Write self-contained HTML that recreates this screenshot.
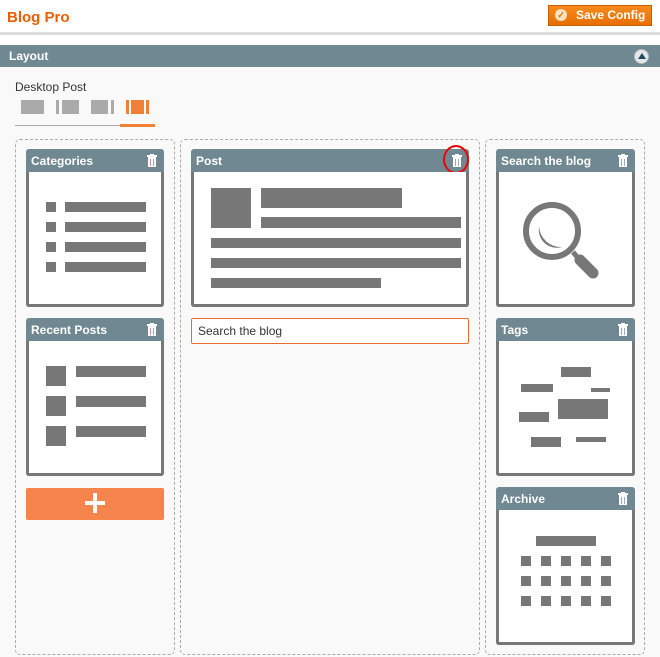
<!DOCTYPE html>
<html><head><meta charset="utf-8"><style>
*{margin:0;padding:0;box-sizing:border-box}
body{width:660px;height:657px;background:#f9f9f9;font-family:"Liberation Sans",Arial,sans-serif;position:relative;overflow:hidden}
.a{position:absolute}
.g{position:absolute;background:#777}
.w{position:absolute;background:#fff;border:3px solid #777;border-top:none;border-radius:0 0 3px 3px}
.h{position:absolute;background:#6f8891;color:#fff;font-weight:bold;font-size:12px;line-height:24px;padding-left:5px;border-radius:3px 3px 0 0}
.col{position:absolute;border:1px dashed #aaa;border-radius:5px}
.t{position:absolute;right:7px;top:5px;width:10px;height:13px}
</style></head><body>
<div class="a" style="left:0;top:0;width:660px;height:32px;background:#fff"></div>
<div class="a" style="left:7px;top:9px;color:#eb5e00;font-weight:bold;font-size:15px">Blog Pro</div>
<div class="a" style="left:548px;top:5px;width:104px;height:21px;background:linear-gradient(#f98a1e,#e86e00);border:1px solid #c95d00;color:#fff;font-weight:bold;font-size:12px;line-height:19px;padding-left:27px">Save Config</div>
<div class="a" style="left:555px;top:9px;width:12px;height:12px;border-radius:50%;background:#fde2c2;color:#e87000;font-size:9px;line-height:12px;text-align:center;font-weight:bold">✓</div>
<div class="a" style="left:0;top:32px;width:660px;height:3px;background:#dcdcdc"></div>
<div class="a" style="left:0;top:35px;width:660px;height:10px;background:#fff"></div>
<div class="a" style="left:0;top:45px;width:660px;height:22px;background:#6f8891;color:#fff;font-weight:bold;font-size:12px;line-height:22px;padding-left:9px">Layout</div>
<div class="a" style="left:634px;top:49px;width:15px;height:15px;border-radius:50%;background:#e4e8ea;border:1px solid #bbb"></div>
<div class="a" style="left:638px;top:53px;width:0;height:0;border-left:4px solid transparent;border-right:4px solid transparent;border-bottom:6px solid #1f4a5a"></div>
<div class="a" style="left:15px;top:80px;font-size:12px;color:#333">Desktop Post</div>
<div class="a" style="left:21px;top:100px;width:23px;height:14px;background:#aaa"></div>
<div class="a" style="left:56px;top:100px;width:3px;height:14px;background:#aaa"></div><div class="a" style="left:62px;top:100px;width:17px;height:14px;background:#aaa"></div>
<div class="a" style="left:91px;top:100px;width:17px;height:14px;background:#aaa"></div><div class="a" style="left:111px;top:100px;width:3px;height:14px;background:#aaa"></div>
<div class="a" style="left:126px;top:100px;width:3px;height:14px;background:#f08035"></div><div class="a" style="left:131px;top:100px;width:13px;height:14px;background:#f08035"></div><div class="a" style="left:146px;top:100px;width:3px;height:14px;background:#f08035"></div>
<div class="a" style="left:15px;top:125px;width:105px;height:1px;background:#aaa"></div>
<div class="a" style="left:120px;top:124px;width:35px;height:3px;background:#f08035"></div>

<div class="col" style="left:15px;top:139px;width:160px;height:516px"></div>
<div class="col" style="left:180px;top:139px;width:300px;height:516px"></div>
<div class="col" style="left:485px;top:139px;width:160px;height:516px"></div>

<div class="h" style="left:26px;top:149px;width:138px;height:23px">Categories<svg class="t" viewBox="0 0 10 13"><rect x="0" y="1" width="10" height="2" fill="#fff"/><rect x="3" y="0" width="4" height="1" fill="#fff"/><rect x="1" y="3" width="8" height="10" fill="#fff"/><rect x="3" y="5" width="1" height="7" fill="#b9a"/><rect x="6" y="5" width="1" height="7" fill="#9ab"/></svg></div>
<div class="w" style="left:26px;top:172px;width:138px;height:135px"></div>
<div class="g" style="left:46px;top:202px;width:10px;height:10px"></div><div class="g" style="left:65px;top:202px;width:81px;height:10px"></div>
<div class="g" style="left:46px;top:222px;width:10px;height:10px"></div><div class="g" style="left:65px;top:222px;width:81px;height:10px"></div>
<div class="g" style="left:46px;top:242px;width:10px;height:10px"></div><div class="g" style="left:65px;top:242px;width:81px;height:10px"></div>
<div class="g" style="left:46px;top:262px;width:10px;height:10px"></div><div class="g" style="left:65px;top:262px;width:81px;height:10px"></div>

<div class="h" style="left:26px;top:318px;width:138px;height:23px">Recent Posts<svg class="t" viewBox="0 0 10 13"><rect x="0" y="1" width="10" height="2" fill="#fff"/><rect x="3" y="0" width="4" height="1" fill="#fff"/><rect x="1" y="3" width="8" height="10" fill="#fff"/><rect x="3" y="5" width="1" height="7" fill="#b9a"/><rect x="6" y="5" width="1" height="7" fill="#9ab"/></svg></div>
<div class="w" style="left:26px;top:341px;width:138px;height:135px"></div>
<div class="g" style="left:46px;top:366px;width:20px;height:20px"></div><div class="g" style="left:76px;top:366px;width:70px;height:11px"></div>
<div class="g" style="left:46px;top:396px;width:20px;height:20px"></div><div class="g" style="left:76px;top:396px;width:70px;height:11px"></div>
<div class="g" style="left:46px;top:426px;width:20px;height:20px"></div><div class="g" style="left:76px;top:426px;width:70px;height:11px"></div>
<div class="a" style="left:26px;top:488px;width:138px;height:32px;background:#f4844b;border-radius:2px"></div>
<div class="a" style="left:85px;top:501px;width:20px;height:4px;background:#fff"></div><div class="a" style="left:93px;top:493px;width:4px;height:20px;background:#fff"></div>

<div class="h" style="left:191px;top:149px;width:278px;height:23px">Post<svg class="t" viewBox="0 0 10 13"><rect x="0" y="1" width="10" height="2" fill="#fff"/><rect x="3" y="0" width="4" height="1" fill="#fff"/><rect x="1" y="3" width="8" height="10" fill="#fff"/><rect x="3" y="5" width="1" height="7" fill="#b9a"/><rect x="6" y="5" width="1" height="7" fill="#9ab"/></svg></div>
<div class="a" style="left:443px;top:145px;width:26px;height:29px;border:2px solid #e00;border-radius:50%"></div>
<div class="w" style="left:191px;top:172px;width:278px;height:135px"></div>
<div class="g" style="left:211px;top:188px;width:40px;height:40px"></div>
<div class="g" style="left:261px;top:188px;width:141px;height:20px"></div>
<div class="g" style="left:261px;top:217px;width:200px;height:11px"></div>
<div class="g" style="left:211px;top:238px;width:250px;height:10px"></div>
<div class="g" style="left:211px;top:258px;width:250px;height:10px"></div>
<div class="g" style="left:211px;top:278px;width:170px;height:10px"></div>
<div class="a" style="left:191px;top:318px;width:278px;height:26px;background:#fff;border:1px solid #eb6a2d;border-radius:2px;font-size:12px;color:#333;line-height:24px;padding-left:6px">Search the blog</div>

<div class="h" style="left:496px;top:149px;width:139px;height:23px">Search the blog<svg class="t" viewBox="0 0 10 13"><rect x="0" y="1" width="10" height="2" fill="#fff"/><rect x="3" y="0" width="4" height="1" fill="#fff"/><rect x="1" y="3" width="8" height="10" fill="#fff"/><rect x="3" y="5" width="1" height="7" fill="#b9a"/><rect x="6" y="5" width="1" height="7" fill="#9ab"/></svg></div>
<div class="w" style="left:496px;top:172px;width:139px;height:135px"></div>
<svg class="a" style="left:496px;top:172px" width="139" height="132" viewBox="0 0 139 132"><circle cx="56" cy="59" r="26" fill="none" stroke="#777" stroke-width="6"/><path d="M43 55 A18 18 0 0 0 66 75 A22 22 0 0 1 43 55Z" fill="#777"/><line x1="77" y1="80" x2="82" y2="86" stroke="#777" stroke-width="5"/><line x1="84" y1="88" x2="97" y2="101" stroke="#777" stroke-width="11" stroke-linecap="round"/></svg>

<div class="h" style="left:496px;top:318px;width:139px;height:23px">Tags<svg class="t" viewBox="0 0 10 13"><rect x="0" y="1" width="10" height="2" fill="#fff"/><rect x="3" y="0" width="4" height="1" fill="#fff"/><rect x="1" y="3" width="8" height="10" fill="#fff"/><rect x="3" y="5" width="1" height="7" fill="#b9a"/><rect x="6" y="5" width="1" height="7" fill="#9ab"/></svg></div>
<div class="w" style="left:496px;top:341px;width:139px;height:135px"></div>
<div class="g" style="left:561px;top:367px;width:30px;height:10px"></div>
<div class="g" style="left:521px;top:384px;width:32px;height:8px"></div>
<div class="g" style="left:591px;top:388px;width:19px;height:4px"></div>
<div class="g" style="left:558px;top:399px;width:50px;height:20px"></div>
<div class="g" style="left:519px;top:412px;width:30px;height:10px"></div>
<div class="g" style="left:531px;top:437px;width:30px;height:10px"></div>
<div class="g" style="left:576px;top:437px;width:30px;height:5px"></div>

<div class="h" style="left:496px;top:487px;width:139px;height:23px">Archive<svg class="t" viewBox="0 0 10 13"><rect x="0" y="1" width="10" height="2" fill="#fff"/><rect x="3" y="0" width="4" height="1" fill="#fff"/><rect x="1" y="3" width="8" height="10" fill="#fff"/><rect x="3" y="5" width="1" height="7" fill="#b9a"/><rect x="6" y="5" width="1" height="7" fill="#9ab"/></svg></div>
<div class="w" style="left:496px;top:510px;width:139px;height:135px"></div>
<div class="g" style="left:536px;top:536px;width:60px;height:10px"></div>
<svg class="a" style="left:521px;top:556px" width="90" height="50"><g fill="#777">
<rect x="0" y="0" width="10" height="10"/><rect x="20" y="0" width="10" height="10"/><rect x="40" y="0" width="10" height="10"/><rect x="60" y="0" width="10" height="10"/><rect x="80" y="0" width="10" height="10"/>
<rect x="0" y="20" width="10" height="10"/><rect x="20" y="20" width="10" height="10"/><rect x="40" y="20" width="10" height="10"/><rect x="60" y="20" width="10" height="10"/><rect x="80" y="20" width="10" height="10"/>
<rect x="0" y="40" width="10" height="10"/><rect x="20" y="40" width="10" height="10"/><rect x="40" y="40" width="10" height="10"/><rect x="60" y="40" width="10" height="10"/><rect x="80" y="40" width="10" height="10"/>
</g></svg>
</body></html>
